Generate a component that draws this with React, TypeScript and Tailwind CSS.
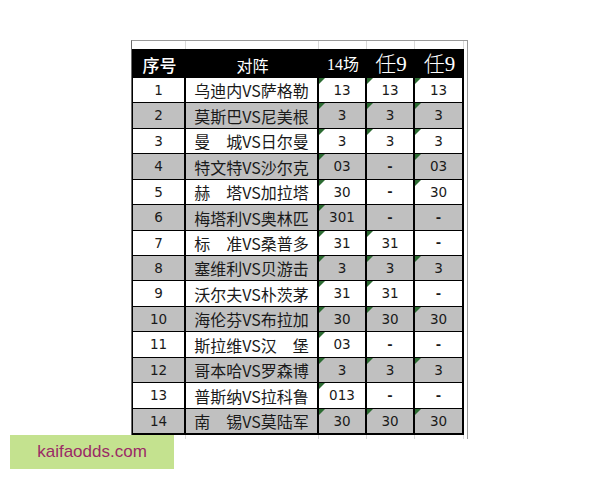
import React from "react";

type Row = { n: number; name: string; a: string; b: string; c: string; h: string };

const rows: Row[] = [
  { n: 1, name: "乌迪内VS萨格勒", a: "13", b: "13", c: "13", h: "h-[25px]" },
  { n: 2, name: "莫斯巴VS尼美根", a: "3", b: "3", c: "3", h: "h-[26px]" },
  { n: 3, name: "曼　城VS日尔曼", a: "3", b: "3", c: "3", h: "h-[25px]" },
  { n: 4, name: "特文特VS沙尔克", a: "03", b: "-", c: "03", h: "h-[26px]" },
  { n: 5, name: "赫　塔VS加拉塔", a: "30", b: "-", c: "30", h: "h-[25px]" },
  { n: 6, name: "梅塔利VS奥林匹", a: "301", b: "-", c: "-", h: "h-[26px]" },
  { n: 7, name: "标　准VS桑普多", a: "31", b: "31", c: "-", h: "h-[25px]" },
  { n: 8, name: "塞维利VS贝游击", a: "3", b: "3", c: "3", h: "h-[25px]" },
  { n: 9, name: "沃尔夫VS朴茨茅", a: "31", b: "31", c: "-", h: "h-[26px]" },
  { n: 10, name: "海伦芬VS布拉加", a: "30", b: "30", c: "30", h: "h-[25px]" },
  { n: 11, name: "斯拉维VS汉　堡", a: "03", b: "-", c: "-", h: "h-[26px]" },
  { n: 12, name: "哥本哈VS罗森博", a: "3", b: "3", c: "3", h: "h-[25px]" },
  { n: 13, name: "普斯纳VS拉科鲁", a: "013", b: "-", c: "-", h: "h-[26px]" },
  { n: 14, name: "南　锡VS莫陆军", a: "30", b: "30", c: "30", h: "h-[26px]" },
];

const gridCols = "grid grid-cols-[53px_133px_48px_48px_49px]";
const num = "font-['DejaVu_Sans','Liberation_Sans',sans-serif]";
const cjk = "font-['Noto_Sans_CJK_SC',sans-serif]";
const serif = "font-['Liberation_Serif','Noto_Sans_CJK_SC',serif]";

function NumCell({ v, last }: { v: string; last: boolean }) {
  const isDash = v === "-";
  return (
    <div
      className={`relative flex items-center justify-center border-r-2 border-black ${
        last ? "border-b-2" : "border-b"
      } ${num} text-[13.5px] text-[#1a1a1a]`}
    >
      {!isDash && (
        <span className="absolute left-0 top-0 h-0 w-0 border-t-[6px] border-r-[6px] border-t-[#2c6b32] border-r-transparent" />
      )}
      {isDash ? <span className="font-bold text-[13px]">-</span> : v}
    </div>
  );
}

function GridGap({ h }: { h: string }) {
  return (
    <div className={`${gridCols} ${h} pl-[1px]`}>
      <div className="border-r border-[#d9d9d9]" />
      <div className="border-r border-[#d9d9d9]" />
      <div className="border-r border-[#d9d9d9]" />
      <div className="border-r border-[#d9d9d9]" />
      <div className="border-r border-[#d9d9d9]" />
    </div>
  );
}

export default function App() {
  return (
    <div className="relative h-[480px] w-[600px] overflow-hidden bg-white pl-[131px] pt-[40px]">
      <div className="w-[337px] border-l border-r border-t border-l-[#6b6b6b] border-r-[#9a9a9a] border-t-[#9a9a9a] pr-[3px]">
        <GridGap h="h-[8px]" />
        <div className="border-l border-black">
          <div className={`${gridCols} h-[29px] bg-black text-white`}>
            <div className={`flex items-center justify-center ${cjk} text-[17px] font-medium`}>序号</div>
            <div className={`flex items-center justify-center ${cjk} text-[16px]`}>对阵</div>
            <div className={`flex items-center justify-center ${serif} text-[16px]`}>14场</div>
            <div className={`flex items-center justify-center ${serif} text-[21px] font-light`}>任9</div>
            <div className={`flex items-center justify-center ${serif} text-[21px] font-light`}>任9</div>
          </div>
          {rows.map((r, i) => {
            const last = i === rows.length - 1;
            const bg = r.n % 2 === 0 ? "bg-[#c0c0c0]" : "bg-white";
            const bb = last ? "border-b-2" : "border-b";
            return (
              <div key={r.n} className={`${gridCols} ${r.h} ${bg}`}>
                <div
                  className={`flex items-center justify-center border-r-2 border-black ${bb} ${num} text-[13.5px] text-[#1a1a1a]`}
                >
                  {r.n}
                </div>
                <div
                  className={`flex items-center justify-center border-r-2 border-black ${bb} ${cjk} text-[16px] leading-none text-[#1a1a1a]`}
                >
                  {r.name}
                </div>
                <NumCell v={r.a} last={last} />
                <NumCell v={r.b} last={last} />
                <NumCell v={r.c} last={last} />
              </div>
            );
          })}
        </div>
        <GridGap h="h-[4px]" />
      </div>
      <div
        className={`absolute left-[10px] top-[435px] flex h-[34px] w-[164px] items-center justify-center bg-[#c4e28f] font-['Liberation_Sans',sans-serif] text-[17px] text-[#9b2a66]`}
      >
        kaifaodds.com
      </div>
    </div>
  );
}
